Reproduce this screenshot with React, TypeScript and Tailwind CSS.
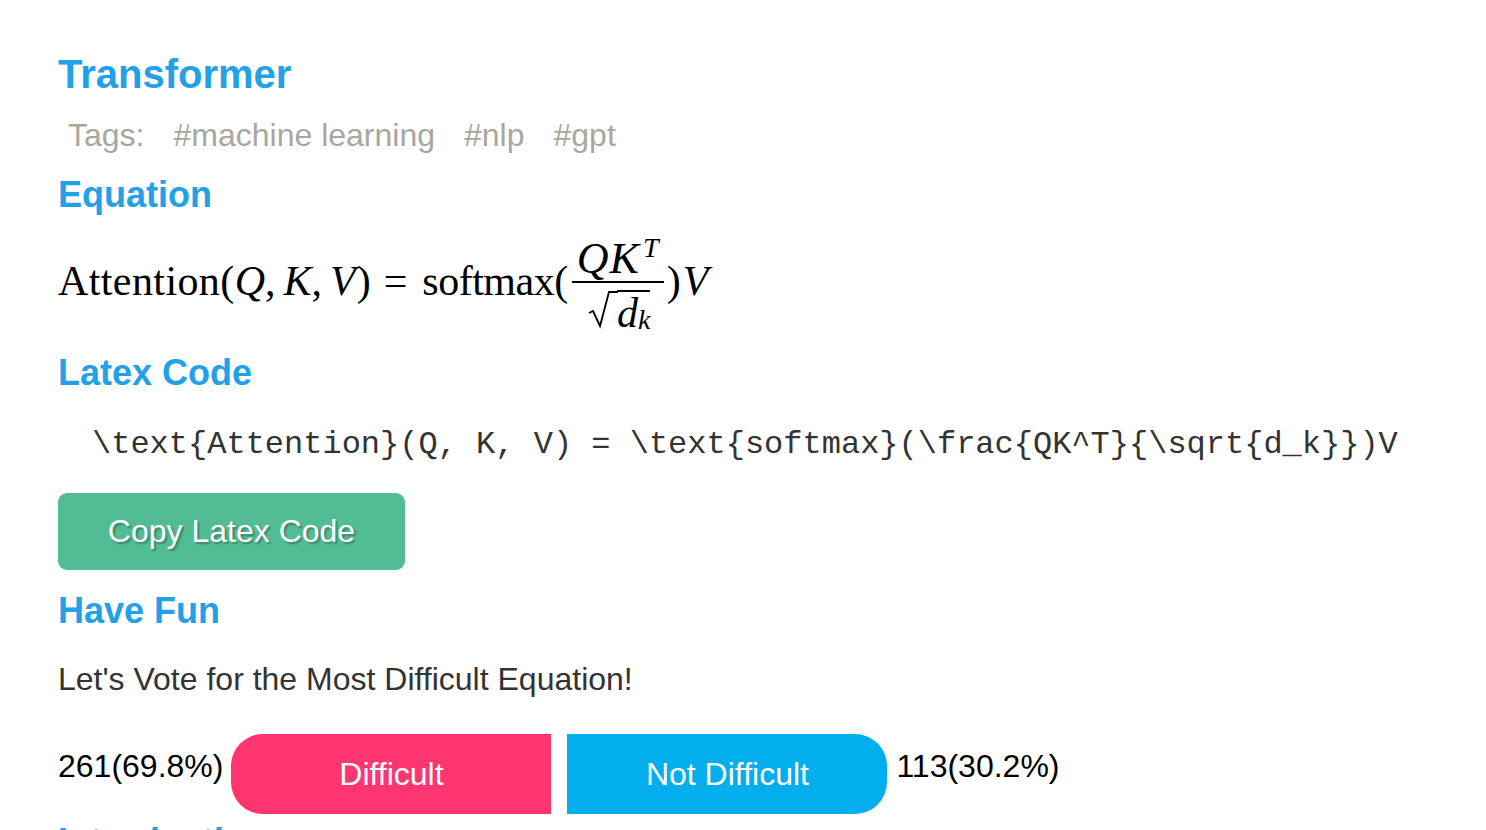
import React from 'react'

const sans = { fontFamily: '"Liberation Sans", Arial, sans-serif' }

function Heading({ children }: { children: React.ReactNode }) {
  return <h2 className="text-[36px] leading-[40px] font-bold text-[#22a0e8]">{children}</h2>
}

function Equation() {
  return (
    <div className="flex items-center h-[112px] font-['Liberation_Serif',serif] text-[42px] leading-none text-black">
      <span className="tracking-[0.4px]">Attention(</span>
      <i>Q</i>
      <span className="mr-[8px]">,</span>
      <i>K</i>
      <span className="mr-[8px]">,</span>
      <i>V</i>
      <span className="ml-[1px]">)</span>
      <span className="ml-[13px] mr-[15px]">=</span>
      <span className="tracking-[-0.5px]">softmax(</span>
      <div className="flex flex-col items-center w-[92px] ml-[4px]">
        <div className="flex items-start justify-center w-full h-[52px] pt-[6px] border-b-2 border-black">
          <i className="text-[44px] tracking-[1px]">QK</i>
          <i className="text-[28px] -mt-[3px] ml-[3px]">T</i>
        </div>
        <div className="flex items-center justify-center h-[48px] pl-[3px]">
          <svg width="30" height="38" viewBox="0 0 30 38" className="mt-[6px] -mr-px">
            <path d="M1 22 L5 20 L12 35 L21 1 L30 1" fill="none" stroke="black" strokeWidth="1.8" />
          </svg>
          <div className="flex items-start border-t-2 border-black h-[36px] mt-[2px]">
            <i>d</i>
            <i className="text-[28px] mt-[14px]">k</i>
          </div>
        </div>
      </div>
      <span className="ml-[3px]">)</span>
      <i className="ml-[2px]">V</i>
    </div>
  )
}

export default function App() {
  return (
    <div className="h-[830px] overflow-hidden bg-white pl-[58px] pt-[52px]" style={sans}>
      <h1 className="text-[40px] leading-[44px] font-bold text-[#22a0e8]">Transformer</h1>

      <div className="flex gap-[29px] pl-[10px] mt-[20px] h-[38px] items-center text-[32px] text-[#a8a79f]">
        <span>Tags:</span>
        <span>#machine learning</span>
        <span>#nlp</span>
        <span>#gpt</span>
      </div>

      <div className="mt-[21px]">
        <Heading>Equation</Heading>
      </div>

      <div className="mt-[10px]">
        <Equation />
      </div>

      <div className="mt-[16px]">
        <Heading>Latex Code</Heading>
      </div>

      <div className="mt-[34px] pl-[34px] font-['Liberation_Mono',monospace] text-[32px] leading-[36px] text-[#333] whitespace-nowrap">
        {'\\text{Attention}(Q, K, V) = \\text{softmax}(\\frac{QK^T}{\\sqrt{d_k}})V'}
      </div>

      <button className="block mt-[30px] w-[347px] h-[77px] rounded-[9px] pb-[2px] bg-[#52bd95] text-white text-[32px] [text-shadow:2px_2px_2px_rgba(0,0,0,0.3)]">
        Copy Latex Code
      </button>

      <div className="mt-[21px]">
        <Heading>Have Fun</Heading>
      </div>

      <p className="mt-[30px] text-[32px] leading-[36px] text-[#333]">Let's Vote for the Most Difficult Equation!</p>

      <div className="flex items-center mt-[37px] h-[80px] text-black text-[32px]">
        <span className="mb-[17px]">261(69.8%)</span>
        <button className="ml-[8px] w-[320px] h-[80px] rounded-l-[32px] bg-[#ff3572] text-white">Difficult</button>
        <button className="ml-[16px] w-[320px] h-[80px] rounded-r-[32px] bg-[#03aeee] text-white">Not Difficult</button>
        <span className="ml-[9px] mb-[17px]">113(30.2%)</span>
      </div>

      <div className="mt-[8px]">
        <Heading>Introduction</Heading>
      </div>
    </div>
  )
}
